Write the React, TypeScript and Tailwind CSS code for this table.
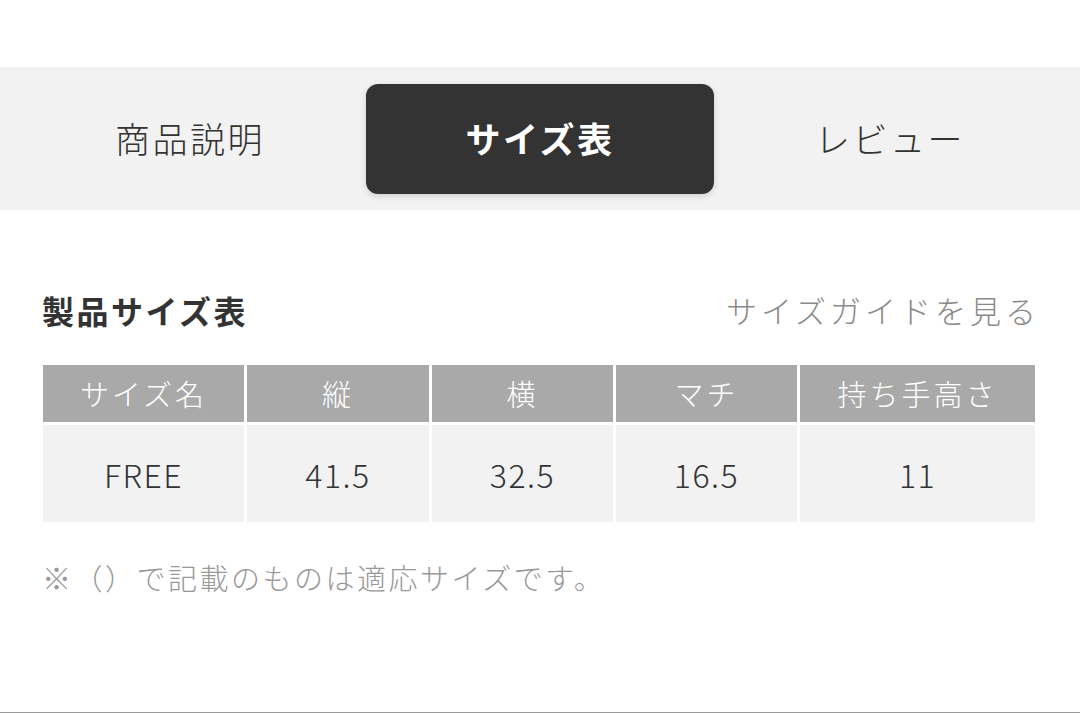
import React, { useState } from 'react';

const font = { fontFamily: '"Noto Sans CJK JP", "Noto Sans", sans-serif' };

const tabs = ['商品説明', 'サイズ表', 'レビュー'];
const headers = ['サイズ名', '縦', '横', 'マチ', '持ち手高さ'];
const values = ['FREE', '41.5', '32.5', '16.5', '11'];

export default function App() {
    const [active, setActive] = useState(1);

    return (
        <div className="w-[1080px] h-[713px] bg-white flex flex-col" style={font}>
            <div className="h-[67px]" />

            {/* tabs */}
            <div className="h-[143px] bg-[#f2f2f2] flex items-center px-4 gap-[2px]">
                {tabs.map((t, i) => (
                    <button
                        key={t}
                        onClick={() => setActive(i)}
                        className={`w-[348px] h-[110px] rounded-[12px] flex items-center justify-center text-[35px] tracking-[2.5px] ${
                            i === active
                                ? 'bg-[#333333] text-white font-bold shadow-[0_2px_6px_rgba(0,0,0,0.15)]'
                                : 'text-[#333333] font-light'
                        }`}
                    >
                        {t}
                    </button>
                ))}
            </div>

            {/* size table */}
            <div className="flex-1 px-[43px] pt-[80px] flex flex-col">
                <div className="flex items-center justify-between h-[40px]">
                    <h2 className="text-[32px] font-bold text-[#333333] -ml-[1px] tracking-[2.5px]">製品サイズ表</h2>
                    <a className="text-[31px] font-light text-[#8a8a8a] tracking-[4px] -mr-[3px]">サイズガイドを見る</a>
                </div>

                <div className="mt-[35px] grid grid-cols-[201px_182px_181px_181px_235px] grid-rows-[57px_97px] gap-[3px] w-[993px]">
                    {headers.map((h) => (
                        <div key={h} className="bg-[#a9a9a9] text-white text-[29px] font-light flex items-center justify-center tracking-[3px]">
                            {h}
                        </div>
                    ))}
                    {values.map((v, i) => (
                        <div key={i} className="bg-[#f2f2f2] text-[#333333] text-[32px] font-light flex items-center justify-center tracking-[1.5px]">
                            {v}
                        </div>
                    ))}
                </div>

                <p className="mt-[36px] h-[40px] flex items-center text-[29px] font-light text-[#999999] -ml-[1px] tracking-[2.5px]">
                    ※（）で記載のものは適応サイズです。
                </p>
            </div>

            <div className="h-[1px] bg-[#999999]" />
        </div>
    );
}
